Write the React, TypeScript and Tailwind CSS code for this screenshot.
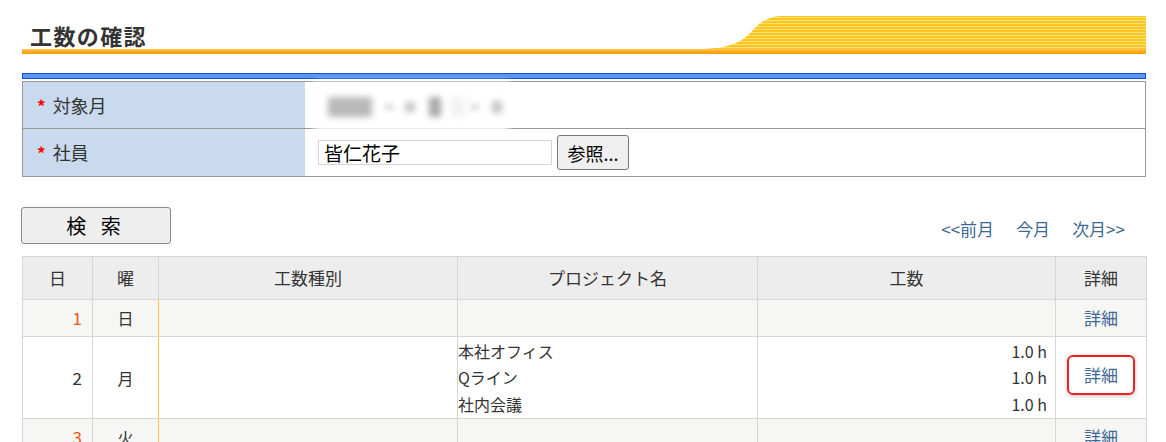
import React from "react";

const jp = "font-['Meiryo','Noto_Sans_CJK_JP',sans-serif]";

type Row = {
  day: number;
  week: string;
  red?: boolean;
  projects: string[];
  hours: string[];
  shade?: boolean;
  marked?: boolean;
};

const rows: Row[] = [
  { day: 1, week: "日", red: true, projects: [], hours: [], shade: true },
  {
    day: 2,
    week: "月",
    projects: ["本社オフィス", "Qライン", "社内会議"],
    hours: ["1.0 h", "1.0 h", "1.0 h"],
    marked: true,
  },
  { day: 3, week: "火", red: true, projects: [], hours: [], shade: true },
];

function Banner() {
  return (
    <svg
      className="absolute left-0 top-[16px]"
      width="1124"
      height="38"
      viewBox="0 0 1124 38"
    >
      <defs>
        <pattern id="stripes" width="4" height="3" patternUnits="userSpaceOnUse">
          <rect width="4" height="3" fill="#ffc51f" />
          <rect width="4" height="1" y="1" fill="#ffe27a" />
        </pattern>
        <linearGradient id="line" x1="0" y1="0" x2="0" y2="1">
          <stop offset="0" stopColor="#ffc560" />
          <stop offset="0.5" stopColor="#f9a91c" />
          <stop offset="1" stopColor="#f5a000" />
        </linearGradient>
      </defs>
      <path
        d="M676,33 C712,33 722,24 733,12 C742,3 750,0 762,0 L1124,0 L1124,38 L676,38 Z"
        fill="url(#stripes)"
      />
      <rect x="0" y="33" width="1124" height="5" fill="url(#line)" />
    </svg>
  );
}

export default function App() {
  return (
    <div className={`${jp} w-[1166px] h-[442px] overflow-hidden bg-white pl-[22px] pr-[20px] text-[#333]`}>

      {/* HEADER */}

      <div className="relative h-[54px]">
        <Banner />
        <h1 className="relative pl-[8px] pt-[21px] text-[22px] leading-[28px] font-bold tracking-[1.4px] text-[#333]">
          工数の確認
        </h1>
      </div>

      <div className="mt-[19px] h-[6px] border border-[#0a55d4] bg-[#5b95f0]" />

      {/* FORM */}

      <div className="mt-[2px] border border-[#999]">

        <div className="flex h-[47px] border-b border-[#999]">
          <div className="flex w-[282px] items-center bg-[#c9daee] pl-[14px] text-[18px]">
            <span className="mr-[7px] text-[17px] font-bold leading-none text-[#f00]">*</span>
            対象月
          </div>
          <div className="flex items-start pl-[9px]">
            <div className="flex h-[49px] w-[195px] items-center bg-white pl-[14px] blur-[3px]">
              <div className="h-[20px] w-[44px] bg-[#b9b9b9]" />
              <div className="ml-[14px] h-[4px] w-[7px] bg-[#bbb]" />
              <div className="ml-[12px] h-[10px] w-[10px] bg-[#c4c4c4]" />
              <div className="ml-[14px] h-[20px] w-[12px] bg-[#aaa]" />
              <div className="ml-[10px] h-[20px] w-[14px] bg-[#f2f2f2]" />
              <div className="ml-[6px] h-[4px] w-[7px] bg-[#bbb]" />
              <div className="ml-[14px] h-[12px] w-[10px] bg-[#c4c4c4]" />
            </div>
          </div>
        </div>

        <div className="flex h-[47px]">
          <div className="flex w-[282px] items-center bg-[#c9daee] pl-[14px] text-[18px]">
            <span className="mr-[7px] text-[17px] font-bold leading-none text-[#f00]">*</span>
            社員
          </div>
          <div className="flex items-center pl-[13px]">
            <div className="flex h-[25px] w-[234px] items-center border border-[#d5d5d5] pl-[5px] text-[19px] leading-none text-black">
              皆仁花子
            </div>
            <button className="ml-[5px] h-[35px] w-[72px] rounded-[3px] border border-[#767676] bg-[#efefef] text-[18px] leading-none text-black">
              参照...
            </button>
          </div>
        </div>

      </div>

      {/* SEARCH */}

      <div className="mt-[30px] flex items-center justify-between">
        <button className="-ml-px h-[37px] w-[150px] rounded-[3px] border border-[#888] bg-[#eeeeee] text-[20px] leading-none tracking-[5px] text-black">
          検 索
        </button>
        <div className="mr-[21px] mt-[6px] flex gap-[22px] text-[17px] text-[#3f6894]">
          <span>&lt;&lt;前月</span>
          <span>今月</span>
          <span>次月&gt;&gt;</span>
        </div>
      </div>

      {/* RESULTS */}

      <table className="mt-[12px] w-[1124px] table-fixed border-collapse text-[16px]">
        <colgroup>
          <col className="w-[70px]" />
          <col className="w-[66px]" />
          <col className="w-[299px]" />
          <col className="w-[300px]" />
          <col className="w-[298px]" />
          <col className="w-[91px]" />
        </colgroup>
        <thead>
          <tr className="h-[43px] bg-[#ededed] text-[17px] font-normal">
            <th className="border border-[#d6d6d6] font-normal">日</th>
            <th className="border border-[#d6d6d6] font-normal">曜</th>
            <th className="border border-[#d6d6d6] font-normal">工数種別</th>
            <th className="border border-[#d6d6d6] font-normal">プロジェクト名</th>
            <th className="border border-[#d6d6d6] font-normal">工数</th>
            <th className="border border-[#d6d6d6] font-normal">詳細</th>
          </tr>
        </thead>
        <tbody>
          {rows.map((r) => (
            <tr
              key={r.day}
              className={r.shade ? "h-[37px] bg-[#f6f6f4]" : "h-[82px] bg-white"}
            >
              <td
                className={`border border-[#d6d6d6] pr-[10px] text-right text-[17px] ${
                  r.red ? "text-[#f5531a]" : "text-[#233]"
                }`}
              >
                {r.day}
              </td>
              <td className="border border-[#d6d6d6] border-r-[#ffc34a] text-center">{r.week}</td>
              <td className="border border-[#d6d6d6] border-l-[#ffc34a]" />
              <td className="border border-[#d6d6d6] pl-0 leading-[26.5px]">
                {r.projects.map((p) => (
                  <div key={p}>{p}</div>
                ))}
              </td>
              <td className="border border-[#d6d6d6] pr-[8px] text-right leading-[26.5px]">
                {r.hours.map((h, i) => (
                  <div key={i}>{h}</div>
                ))}
              </td>
              <td className="border border-[#d6d6d6] text-center text-[17px] text-[#3f6894]">
                {r.marked ? (
                  <span className="mb-[5px] inline-block rounded-[6px] border-2 border-[#f02020] px-[15px] py-[5px] shadow-[0_1px_4px_rgba(0,0,0,0.25)]">
                    詳細
                  </span>
                ) : (
                  "詳細"
                )}
              </td>
            </tr>
          ))}
        </tbody>
      </table>

    </div>
  );
}
